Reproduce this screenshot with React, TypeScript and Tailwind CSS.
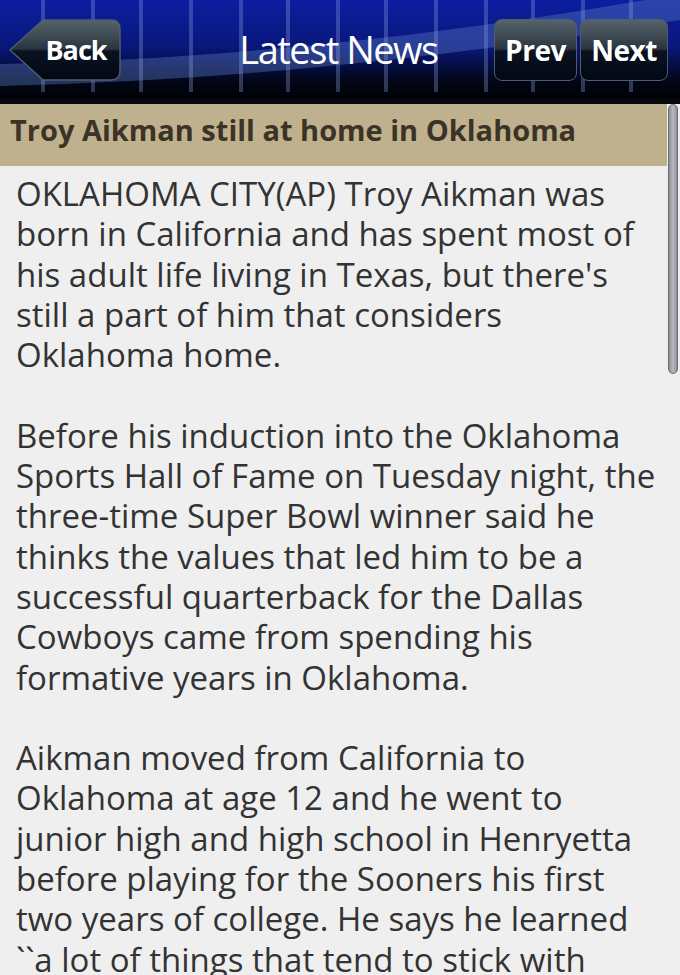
import React from 'react';

// article text, broken where the device wrapped it
const paragraphs = [
  [
    "OKLAHOMA CITY(AP) Troy Aikman was",
    "born in California and has spent most of",
    "his adult life living in Texas, but there's",
    "still a part of him that considers",
    "Oklahoma home.",
  ],
  [
    "Before his induction into the Oklahoma",
    "Sports Hall of Fame on Tuesday night, the",
    "three-time Super Bowl winner said he",
    "thinks the values that led him to be a",
    "successful quarterback for the Dallas",
    "Cowboys came from spending his",
    "formative years in Oklahoma.",
  ],
  [
    "Aikman moved from California to",
    "Oklahoma at age 12 and he went to",
    "junior high and high school in Henryetta",
    "before playing for the Sooners his first",
    "two years of college. He says he learned",
    "``a lot of things that tend to stick with",
    "you.''",
  ],
];

const stripes = [43, 93, 141, 191, 241, 288, 338, 386, 436, 486, 533, 583, 631];

function HeaderArt() {
  return (
    <svg className="absolute inset-0" width="680" height="104" viewBox="0 0 680 104">
      <defs>
        <linearGradient id="sky" x1="0" y1="0" x2="0" y2="1">
          <stop offset="0" stopColor="#0c1ea0" />
          <stop offset="0.45" stopColor="#09177a" />
          <stop offset="0.78" stopColor="#020617" />
          <stop offset="1" stopColor="#000000" />
        </linearGradient>
      </defs>
      <rect width="680" height="104" fill="url(#sky)" />
      <path d="M0 64 C 200 60, 420 40, 680 -6 L 680 20 C 460 56, 240 80, 0 86 Z" fill="#5b7bc4" opacity="0.4" />
      {stripes.map((x) => (
        <rect key={x} x={x - 2} y="0" width="4" height="92" fill="#8ea4e6" opacity="0.32" />
      ))}
      <rect y="99" width="680" height="5" fill="#05080c" />
    </svg>
  );
}

function BackButton() {
  return (
    <button className="relative w-[112px] h-[62px] flex items-center justify-center pl-[22px]">
      <svg className="absolute inset-0" width="112" height="62" viewBox="0 0 112 62">
        <defs>
          <linearGradient id="btnBack" x1="0" y1="0" x2="0" y2="1">
            <stop offset="0" stopColor="#56636b" />
            <stop offset="0.48" stopColor="#2a363f" />
            <stop offset="0.52" stopColor="#0a1220" />
            <stop offset="1" stopColor="#020814" />
          </linearGradient>
        </defs>
        <path d="M34 1 L102 1 Q111 1 111 10 L111 52 Q111 61 102 61 L34 61 L1 31 Z" fill="url(#btnBack)" stroke="#4f5d6b" strokeWidth="1.5" />
      </svg>
      <span className="relative text-white font-bold text-[27px] tracking-[-1px]">Back</span>
    </button>
  );
}

function NavButton({ label, w }: { label: string; w: string }) {
  return (
    <button className={`${w} h-[62px] rounded-[8px] border-[1.5px] border-[#4f5d6b] bg-[linear-gradient(to_bottom,#56636b_0%,#2a363f_48%,#0a1220_52%,#020814_100%)] flex items-center justify-center`}>
      <span className="text-white font-bold text-[28px] tracking-[-0.5px]">{label}</span>
    </button>
  );
}

export default function App() {
  return (
    <div className="w-[680px] h-[975px] overflow-hidden bg-[#efefef] relative [font-family:'Open_Sans',sans-serif]">
      {/* Header */}
      <div className="relative h-[104px]">
        <HeaderArt />
        <div className="relative grid grid-cols-[1fr_auto_1fr] items-start pt-[19px] pl-[9px] pr-[12px]">
          <BackButton />
          <div className="text-white text-[38px] leading-[60px] tracking-[-1.5px]">Latest News</div>
          <div className="flex gap-[3px] justify-end">
            <NavButton label="Prev" w="w-[83px]" />
            <NavButton label="Next" w="w-[88px]" />
          </div>
        </div>
      </div>

      {/* Article */}
      <div className="w-[667px]">
        <div className="h-[62px] bg-[#bfb18d] flex items-center pl-[10px] pb-[10px]">
          <h1 className="text-[29px] leading-[40px] font-bold text-[#3b3426]">Troy Aikman still at home in Oklahoma</h1>
        </div>
        <div className="pl-[16px] pt-[8px] text-[33px] leading-[40.3px] text-[#333333] flex flex-col gap-[40.3px]">
          {paragraphs.map((lines, i) => (
            <p key={i}>
              {lines.map((l) => (
                <span key={l} className="block whitespace-nowrap">{l}</span>
              ))}
            </p>
          ))}
        </div>
      </div>

      {/* Scrollbar */}
      <div className="absolute left-[668px] top-[104px] w-[10px] h-[270px] rounded-full border border-[#6c6c72] bg-[linear-gradient(to_right,#8d8d94,#b9b9c0_50%,#8d8d94)]" />
    </div>
  );
}
